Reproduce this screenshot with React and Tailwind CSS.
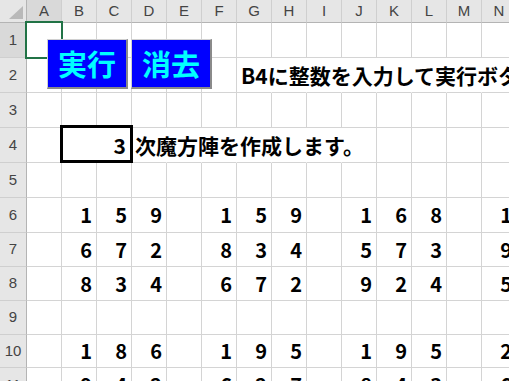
import React from "react";

const COLS = ["A", "B", "C", "D", "E", "F", "G", "H", "I", "J", "K", "L", "M", "N", "O"];
const ROW_H = { 1: 35, 2: 35, 3: 35, 4: 35, 5: 35, 6: 35, 7: 34, 8: 34, 9: 34, 10: 33, 11: 35 };

const E = "";
const DATA = {
  6: [E, "1", "5", "9", E, "1", "5", "9", E, "1", "6", "8", E, "1", "5"],
  7: [E, "6", "7", "2", E, "8", "3", "4", E, "5", "7", "3", E, "9", "3"],
  8: [E, "8", "3", "4", E, "6", "7", "2", E, "9", "2", "4", E, "5", "7"],
  10: [E, "1", "8", "6", E, "1", "9", "5", E, "1", "9", "5", E, "2", "9"],
  11: [E, "9", "4", "2", E, "6", "2", "7", E, "8", "4", "3", E, "6", "1"],
};

const CELL_FONT = "font-['Noto_Sans_CJK_JP','Noto_Sans',sans-serif]";

function Corner() {
  return (
    <div className="relative w-[27px] h-[23px] shrink-0 bg-[#e6e6e6] border-r border-b border-[#b4b4b4]">
      <svg className="absolute left-0 top-0" width="26" height="22" viewBox="0 0 26 22">
        <polygon points="23,6 23,19 9,19" fill="#b9b9b9" />
      </svg>
    </div>
  );
}

function HeaderRow() {
  return (
    <div className="flex h-[23px]">
      <Corner />
      {COLS.map((c) => (
        <div
          key={c}
          className={`w-[35px] h-[23px] shrink-0 flex items-center justify-center border-r border-b border-r-[#cfcfcf] border-b-[#b4b4b4] text-[15px] text-[#444] font-['Liberation_Sans',Arial,sans-serif] ${
            c === "A" ? "bg-[#d9d9d9]" : "bg-[#e6e6e6]"
          }`}
        >
          {c}
        </div>
      ))}
    </div>
  );
}

function RowHead({ n, h }) {
  return (
    <div
      className={`w-[27px] shrink-0 flex items-center justify-center border-r border-b border-r-[#b4b4b4] border-b-[#cfcfcf] text-[15px] text-[#444] font-['Liberation_Sans',Arial,sans-serif] ${
        n === 1 ? "bg-[#d9d9d9]" : "bg-[#e6e6e6]"
      }`}
      style={{ height: h }}
    >
      {n}
    </div>
  );
}

function Cell({ children, noRight, className = "" }) {
  return (
    <div
      className={`w-[35px] h-full shrink-0 flex items-center border-b border-[#d4d4d4] ${
        noRight ? "border-r border-r-transparent" : "border-r"
      } ${className}`}
    >
      {children}
    </div>
  );
}

function NumRow({ n }) {
  const h = ROW_H[n];
  const vals = DATA[n];
  return (
    <div className="flex" style={{ height: h }}>
      <RowHead n={n} h={h} />
      {COLS.map((c, i) => (
        <Cell key={c} className="justify-end pr-[4px]">
          {vals && vals[i] ? (
            <span className={`${CELL_FONT} font-bold text-[20px] leading-none text-black`}>{vals[i]}</span>
          ) : null}
        </Cell>
      ))}
    </div>
  );
}

function Row2() {
  const h = ROW_H[2];
  return (
    <div className="flex" style={{ height: h }}>
      <RowHead n={2} h={h} />
      {COLS.map((c, i) => (
        <Cell key={c} noRight={i >= 6}>
          {c === "G" ? (
            <span className={`${CELL_FONT} font-bold text-[21px] leading-none text-black whitespace-nowrap pl-[4px]`}>
              B4に整数を入力して実行ボタンを押してください。
            </span>
          ) : null}
        </Cell>
      ))}
    </div>
  );
}

function Row4() {
  const h = ROW_H[4];
  const rest = COLS.slice(3);
  return (
    <div className="flex" style={{ height: h }}>
      <RowHead n={4} h={h} />
      <Cell />
      <div className="w-[70px] h-full shrink-0 flex items-center justify-end pr-[5px] border-r border-b border-[#d4d4d4]">
        <span className={`${CELL_FONT} font-bold text-[21px] leading-none text-black`}>3</span>
      </div>
      {rest.map((c, i) => (
        <Cell key={c} noRight={i <= 5}>
          {c === "D" ? (
            <span className={`${CELL_FONT} font-bold text-[21px] leading-none text-black whitespace-nowrap pl-[3px]`}>
              次魔方陣を作成します。
            </span>
          ) : null}
        </Cell>
      ))}
    </div>
  );
}

function Button({ label, left }) {
  return (
    <button
      className={`absolute top-[39px] h-[50px] w-[81px] bg-[#0000ff] border-t border-l border-t-[#d0d0d0] border-l-[#d0d0d0] border-r-2 border-b-2 border-r-[#8a8a8a] border-b-[#8a8a8a] flex items-center justify-center ${left}`}
    >
      <span className={`${CELL_FONT} font-bold text-[29px] leading-none text-[#00ffff]`}>{label}</span>
    </button>
  );
}

export default function App() {
  const rows = [1, 2, 3, 4, 5, 6, 7, 8, 9, 10, 11];
  return (
    <div className="relative w-[509px] h-[381px] overflow-hidden bg-white">
      <div className="w-[560px]">
        <HeaderRow />
        {rows.map((n) => {
          if (n === 2) return <Row2 key={n} />;
          if (n === 4) return <Row4 key={n} />;
          return <NumRow key={n} n={n} />;
        })}
      </div>

      {/* selected cell A1 */}
      <div className="absolute left-[25px] top-[21px] w-[38px] h-[38px] border-2 border-[#217346]" />

      {/* thick border around merged B4:C4 */}
      <div className="absolute left-[60px] top-[125px] w-[73px] h-[38px] border-[3px] border-black" />

      <Button label="実行" left="left-[47px]" />
      <Button label="消去" left="left-[131px]" />
    </div>
  );
}
